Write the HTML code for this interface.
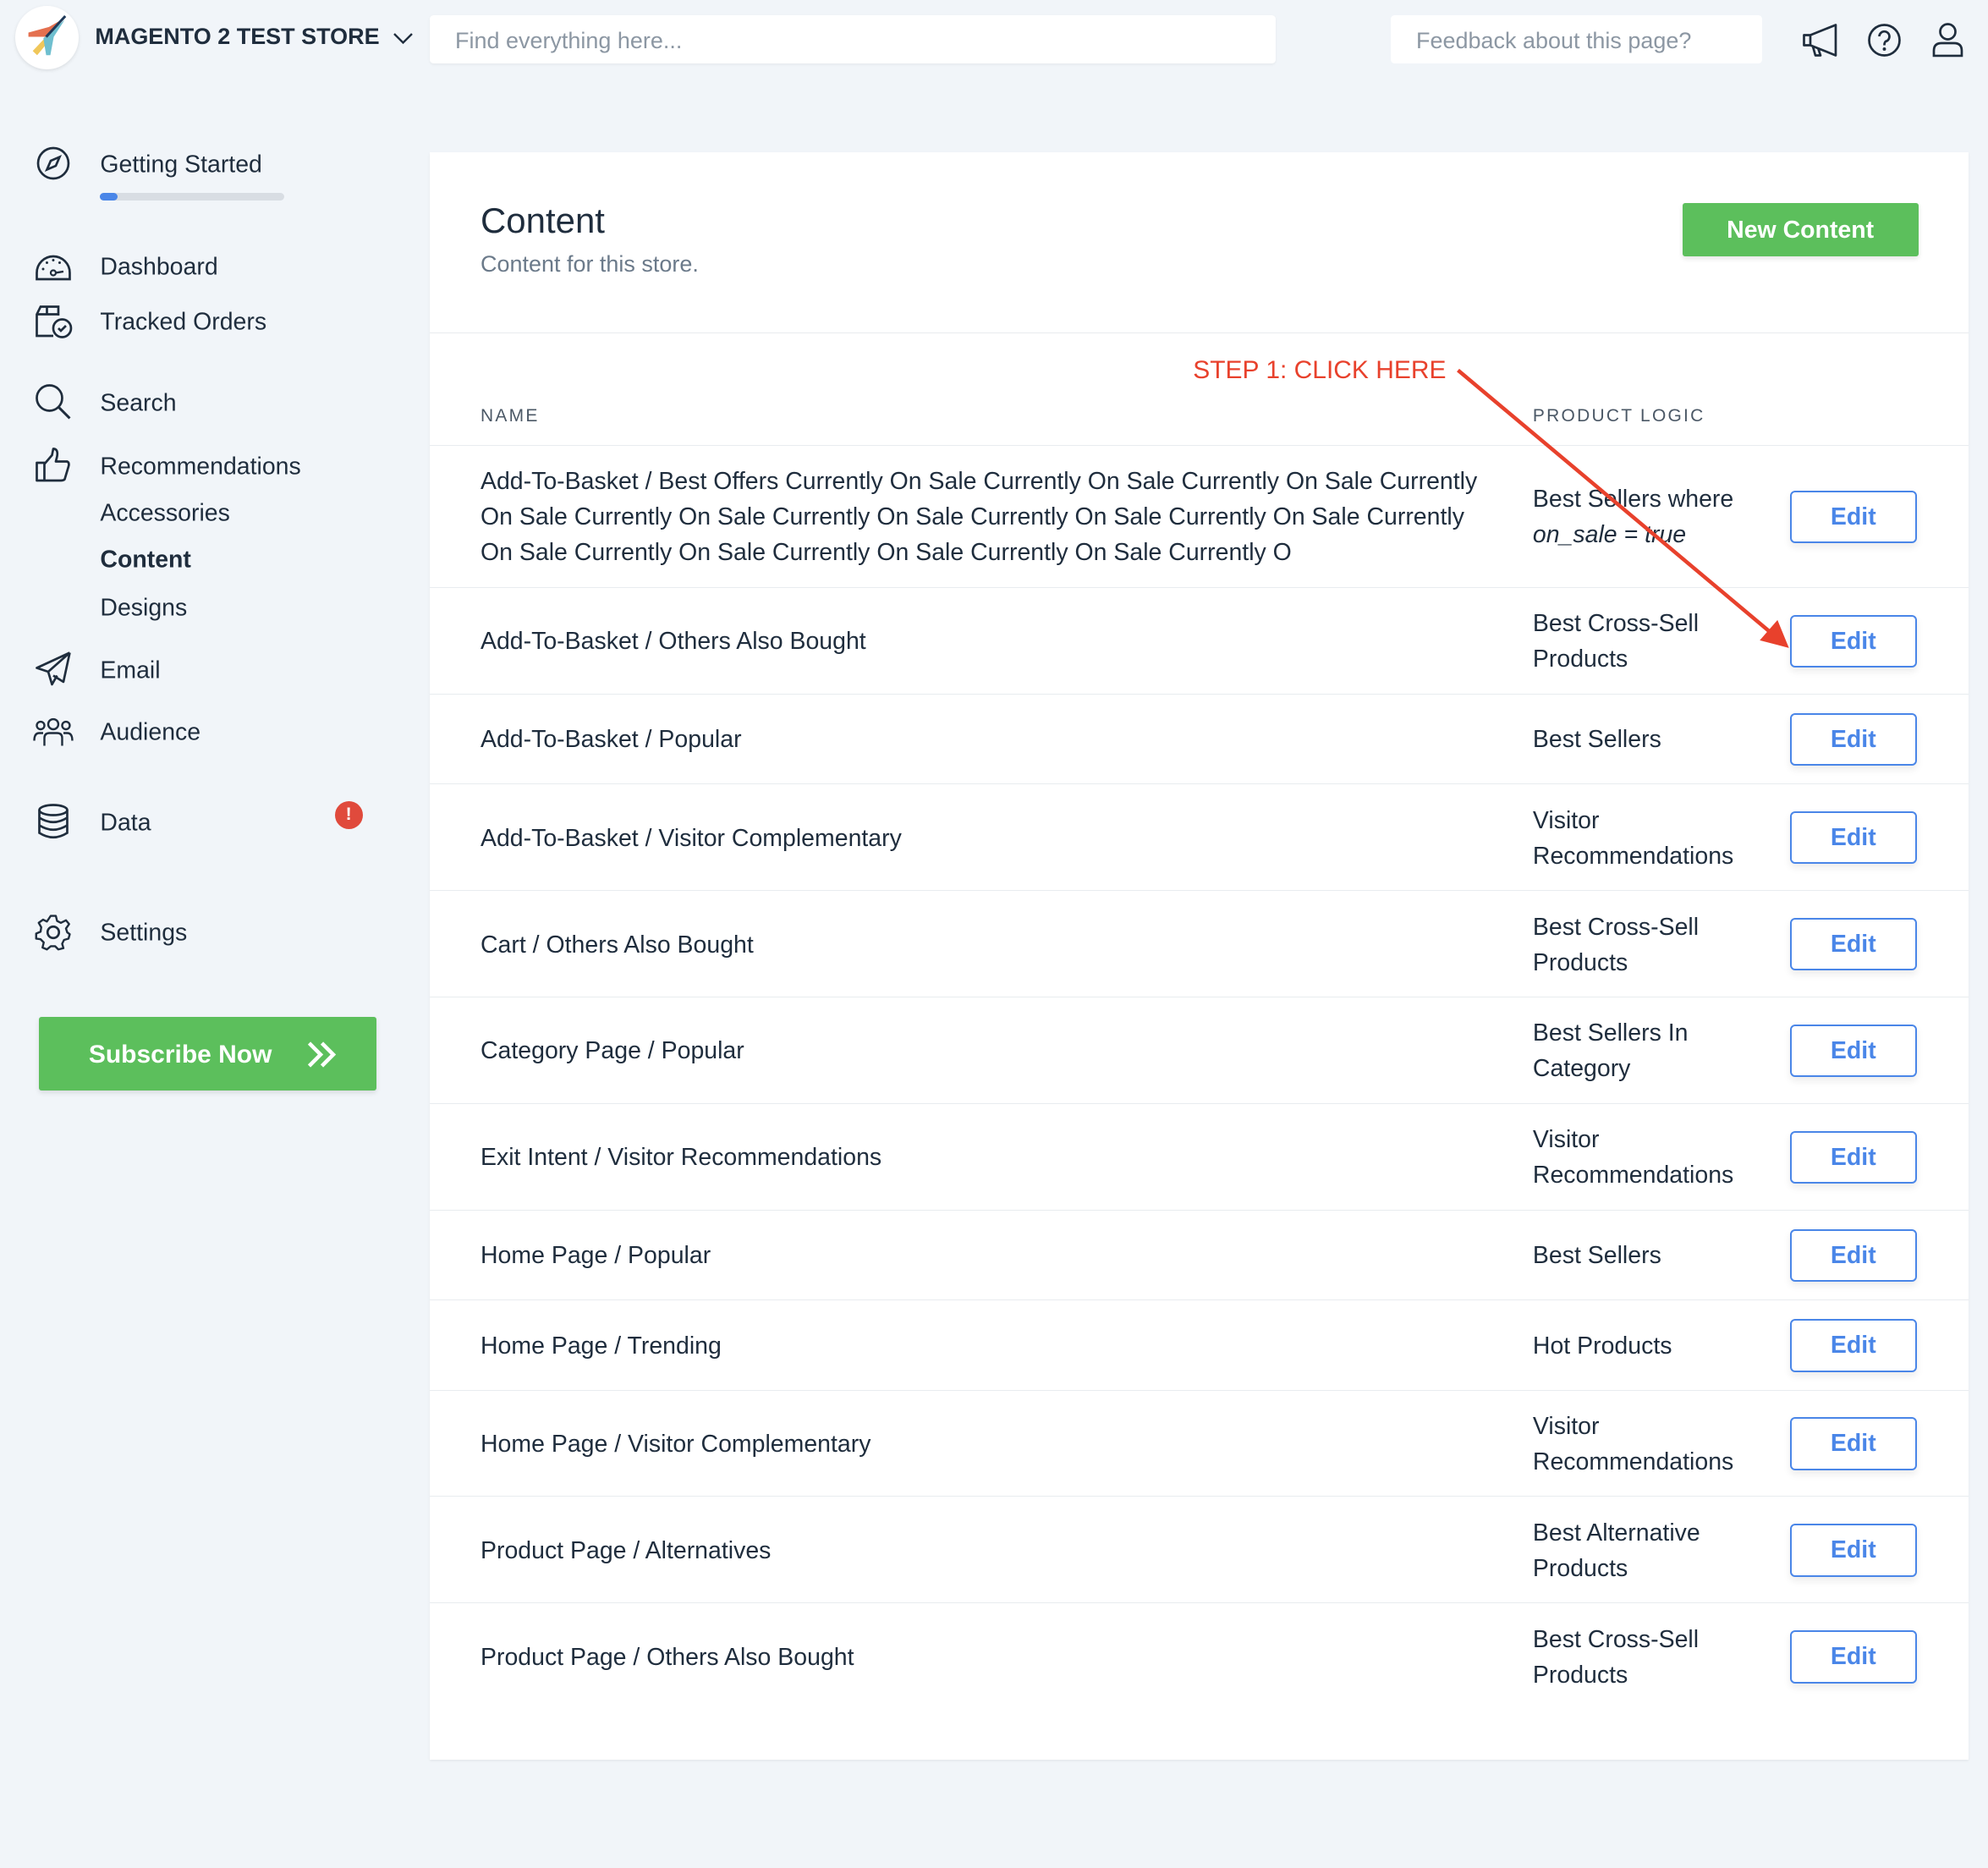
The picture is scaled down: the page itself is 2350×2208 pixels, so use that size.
<!DOCTYPE html>
<html><head><meta charset="utf-8"><style>
html,body{margin:0;padding:0;background:#f1f5f9;}
#w{zoom:1.4987;width:1568px;height:1473px;position:relative;font-family:"Liberation Sans",sans-serif;color:#1f2d3d;overflow:hidden}
.a{position:absolute}
.nav{position:absolute;left:79px;font-size:19px;color:#1f2d3d;transform:translateY(-50%);margin-top:1px}
.ic{position:absolute;left:26px;width:32px;height:32px;transform:translateY(-50%)}
.row{position:absolute;left:339px;width:1214px;border-top:1px solid #e8ecef;display:flex;align-items:center}
.row .n{position:absolute;left:40px;width:805px;font-size:19px;line-height:28px;margin-top:2px}
.row .l{position:absolute;left:870px;width:185px;font-size:19px;line-height:28px;margin-top:2px}
.row .b{position:absolute;left:1073px;width:97px;height:39px;border:2px solid #4a86e8;border-radius:4px;color:#4a86e8;font-weight:bold;font-size:19px;text-align:center;line-height:39px;box-shadow:0 3px 6px rgba(0,0,0,.08);background:#fff}
</style></head><body><div id="w">
<!-- header -->
<div class="a" style="left:12px;top:5px;width:50px;height:50px;border-radius:50%;background:#fff;box-shadow:0 1px 3px rgba(0,0,0,.1)"></div>
<svg class="a" style="left:12px;top:5px" width="50" height="50" viewBox="0 0 50 50"><path d="M10.4 21 L10.4 24.4 L24.4 24.4 L40 8.9 L26.6 16.6 Z" fill="#e4704f"/><path d="M13.8 35.5 L17.3 38.9 L26.6 27.7 L22.2 26.6 Z" fill="#f0c75a"/><path d="M22.2 25.5 L24.4 38.9 L27.7 38.9 L30.4 24.4 L39 11 Z" fill="#6fbfcf"/><path d="M24.4 24.4 L39.5 8" stroke="#1f3a5a" stroke-width="2"/></svg>
<div class="a" style="left:75px;top:19px;font-weight:bold;font-size:18px;color:#1f2d3d">MAGENTO 2 TEST STORE</div>
<svg class="a" style="left:309px;top:25px" width="18" height="12"><path d="M2 2 L9 9 L16 2" stroke="#1f2d3d" stroke-width="1.6" fill="none"/></svg>
<div class="a" style="left:339px;top:12px;width:667px;height:38px;background:#fff;border-radius:3px;box-shadow:0 1px 2px rgba(0,0,0,.05)"><span style="position:absolute;left:20px;top:10px;font-size:18px;color:#8c97a3">Find everything here...</span></div>
<div class="a" style="left:1097px;top:12px;width:293px;height:38px;background:#fff;border-radius:3px"><span style="position:absolute;left:20px;top:10px;font-size:18px;color:#8c97a3">Feedback about this page?</span></div>
<svg class="a" style="left:1420px;top:17px" width="34" height="30"><path d="M3 11 L3 19 L8 19 L28 27 L28 3 L8 11 Z M8 11 L8 19 M10 20 L12 27 L16 27 L14 21" stroke="#1f2d3d" stroke-width="1.8" fill="none" stroke-linejoin="round"/></svg>
<svg class="a" style="left:1471px;top:17px" width="30" height="30"><circle cx="15" cy="15" r="12" stroke="#1f2d3d" stroke-width="1.8" fill="none"/><path d="M11 12 a4 4 0 1 1 5 4 q-1 1 -1 3" stroke="#1f2d3d" stroke-width="1.8" fill="none"/><circle cx="15" cy="22" r="1.3" fill="#1f2d3d"/></svg>
<svg class="a" style="left:1521px;top:16px" width="30" height="30"><circle cx="15" cy="9" r="6" stroke="#1f2d3d" stroke-width="1.8" fill="none"/><path d="M4 28 L4 24 Q4 18 10 18 L20 18 Q26 18 26 24 L26 28 Z" stroke="#1f2d3d" stroke-width="1.8" fill="none"/></svg>
<!-- sidebar -->
<svg class="ic" style="top:129px" viewBox="0 0 32 32"><circle cx="16" cy="16" r="12" stroke="#1f2d3d" stroke-width="1.8" fill="none"/><path d="M21 11 L18 18 L11 21 L14 14 Z" stroke="#1f2d3d" stroke-width="1.8" fill="none"/></svg>
<div class="nav" style="top:129px">Getting Started</div>
<div class="a" style="left:79px;top:152px;width:145px;height:6px;border-radius:3px;background:#d8dde3"></div>
<div class="a" style="left:79px;top:152px;width:14px;height:6px;border-radius:3px;background:#4a86e8"></div>
<svg class="ic" style="top:210px" viewBox="0 0 32 32"><path d="M3 26 L3 21 A13 13 0 0 1 29 21 L29 26 Z" stroke="#1f2d3d" stroke-width="1.8" fill="none"/><circle cx="16" cy="21" r="2" stroke="#1f2d3d" stroke-width="1.5" fill="none"/><path d="M18 21 L24 20" stroke="#1f2d3d" stroke-width="1.6"/><circle cx="8" cy="18" r="1" fill="#1f2d3d"/><circle cx="11" cy="13" r="1" fill="#1f2d3d"/><circle cx="16" cy="11" r="1" fill="#1f2d3d"/><circle cx="21" cy="13" r="1" fill="#1f2d3d"/></svg>
<div class="nav" style="top:210px">Dashboard</div>
<svg class="ic" style="top:253px" viewBox="0 0 32 32"><path d="M20 12 L20 5 L6 5 L3 11 L3 28 L16 28 M3 11 L20 11 M11 5 L11 11" stroke="#1f2d3d" stroke-width="1.8" fill="none"/><circle cx="23" cy="22" r="7" stroke="#1f2d3d" stroke-width="1.8" fill="none"/><path d="M20 22 L22 24 L26 20" stroke="#1f2d3d" stroke-width="1.8" fill="none"/></svg>
<div class="nav" style="top:253px">Tracked Orders</div>
<svg class="ic" style="top:317px" viewBox="0 0 32 32"><circle cx="13" cy="13" r="10" stroke="#1f2d3d" stroke-width="1.8" fill="none"/><path d="M20 20 L29 29" stroke="#1f2d3d" stroke-width="2"/></svg>
<div class="nav" style="top:317px">Search</div>
<svg class="ic" style="top:367px" viewBox="0 0 32 32"><path d="M3 14 L9 14 L9 28 L3 28 Z M9 15 L15 8 L16 3 Q20 3 19 9 L18 13 L27 13 Q29 14 28 17 L25 27 Q24 28 22 28 L9 28" stroke="#1f2d3d" stroke-width="1.8" fill="none" stroke-linejoin="round"/></svg>
<div class="nav" style="top:367px">Recommendations</div>
<div class="nav" style="top:404px">Accessories</div>
<div class="nav" style="top:441px;font-weight:bold">Content</div>
<div class="nav" style="top:479px">Designs</div>
<svg class="ic" style="top:528px" viewBox="0 0 32 32"><path d="M29 3 L3 15 L12 18 L15 28 L19 21 M29 3 L12 18 M29 3 L24 26 L16 21" stroke="#1f2d3d" stroke-width="1.8" fill="none" stroke-linejoin="round"/></svg>
<div class="nav" style="top:528px">Email</div>
<svg class="ic" style="top:577px" viewBox="0 0 32 32"><circle cx="16" cy="10" r="4" stroke="#1f2d3d" stroke-width="1.6" fill="none"/><circle cx="6" cy="11" r="3" stroke="#1f2d3d" stroke-width="1.6" fill="none"/><circle cx="26" cy="11" r="3" stroke="#1f2d3d" stroke-width="1.6" fill="none"/><path d="M9 27 L9 21 Q9 17 13 17 L19 17 Q23 17 23 21 L23 27 M1 23 Q1 17 5 17 L8 17 M31 23 Q31 17 27 17 L24 17" stroke="#1f2d3d" stroke-width="1.6" fill="none"/></svg>
<div class="nav" style="top:577px">Audience</div>
<svg class="ic" style="top:648px" viewBox="0 0 32 32"><ellipse cx="16" cy="7" rx="11" ry="4" stroke="#1f2d3d" stroke-width="1.8" fill="none"/><path d="M5 7 L5 25 Q16 32 27 25 L27 7 M5 13 Q16 20 27 13 M5 19 Q16 26 27 19" stroke="#1f2d3d" stroke-width="1.8" fill="none"/></svg>
<div class="nav" style="top:648px">Data</div>
<div class="a" style="left:264px;top:632px;width:22px;height:22px;border-radius:50%;background:#e04a3c;color:#fff;font-size:14px;font-weight:bold;text-align:center;line-height:22px">!</div>
<svg class="ic" style="top:735px" viewBox="0 0 32 32"><circle cx="16" cy="16" r="4.5" stroke="#1f2d3d" stroke-width="1.8" fill="none"/><path d="M14 3 L18 3 L19 7 L22 8.5 L26 6.5 L28.5 9.5 L26 13 L27 16 L29 17.5 L28 21 L24.5 22 L23 25 L24 28.5 L20 29.5 L17.5 27 L14 27 L11 29.5 L7.5 28 L8.5 24 L6 21.5 L2.5 21 L2.5 17 L6 15.5 L6.5 12 L4.5 8.5 L8 6 L11 7.5 Z" stroke="#1f2d3d" stroke-width="1.6" fill="none" stroke-linejoin="round"/></svg>
<div class="nav" style="top:735px">Settings</div>
<div class="a" style="left:31px;top:802px;width:266px;height:58px;background:#5cbf5c;border-radius:2px;box-shadow:0 2px 4px rgba(0,0,0,.1);color:#fff;font-weight:bold;font-size:20px;line-height:60px"><span style="position:absolute;left:39px">Subscribe Now</span><svg style="position:absolute;left:210px;top:19px" width="26" height="22"><path d="M3 2 L12 11 L3 20 M13 2 L22 11 L13 20" stroke="#fff" stroke-width="3" fill="none"/></svg></div>
<!-- card -->
<div class="a" style="left:339px;top:120px;width:1214px;height:1268px;background:#fff;box-shadow:0 1px 2px rgba(0,0,0,.06)"></div>
<div class="a" style="left:379px;top:158px;font-size:28px;color:#1f2d3d">Content</div>
<div class="a" style="left:379px;top:198px;font-size:18px;color:#6b7a8a">Content for this store.</div>
<div class="a" style="left:1327px;top:160px;width:186px;height:42px;background:#5cbf5c;border-radius:2px;color:#fff;font-weight:bold;font-size:19px;text-align:center;line-height:44px;box-shadow:0 2px 4px rgba(0,0,0,.1)">New Content</div>
<div class="a" style="left:339px;top:262px;width:1214px;border-top:1px solid #e8ecef"></div>
<div class="a" style="left:379px;top:320px;font-size:14px;letter-spacing:1.5px;color:#4b5866">NAME</div>
<div class="a" style="left:1209px;top:320px;font-size:14px;letter-spacing:1.5px;color:#4b5866">PRODUCT LOGIC</div>

<div class="row" style="top:351px;height:112px"><div class="n">Add-To-Basket / Best Offers Currently On Sale Currently On Sale Currently On Sale Currently On Sale Currently On Sale Currently On Sale Currently On Sale Currently On Sale Currently On Sale Currently On Sale Currently On Sale Currently On Sale Currently O</div><div class="l">Best Sellers where <i>on_sale = true</i></div><div class="b">Edit</div></div>
<div class="row" style="top:463px;height:84px"><div class="n">Add-To-Basket / Others Also Bought</div><div class="l">Best Cross-Sell Products</div><div class="b">Edit</div></div>
<div class="row" style="top:547px;height:71px"><div class="n">Add-To-Basket / Popular</div><div class="l">Best Sellers</div><div class="b">Edit</div></div>
<div class="row" style="top:618px;height:84px"><div class="n">Add-To-Basket / Visitor Complementary</div><div class="l">Visitor Recommendations</div><div class="b">Edit</div></div>
<div class="row" style="top:702px;height:84px"><div class="n">Cart / Others Also Bought</div><div class="l">Best Cross-Sell Products</div><div class="b">Edit</div></div>
<div class="row" style="top:786px;height:84px"><div class="n">Category Page / Popular</div><div class="l">Best Sellers In Category</div><div class="b">Edit</div></div>
<div class="row" style="top:870px;height:84px"><div class="n">Exit Intent / Visitor Recommendations</div><div class="l">Visitor Recommendations</div><div class="b">Edit</div></div>
<div class="row" style="top:954px;height:71px"><div class="n">Home Page / Popular</div><div class="l">Best Sellers</div><div class="b">Edit</div></div>
<div class="row" style="top:1025px;height:71px"><div class="n">Home Page / Trending</div><div class="l">Hot Products</div><div class="b">Edit</div></div>
<div class="row" style="top:1096px;height:84px"><div class="n">Home Page / Visitor Complementary</div><div class="l">Visitor Recommendations</div><div class="b">Edit</div></div>
<div class="row" style="top:1180px;height:84px"><div class="n">Product Page / Alternatives</div><div class="l">Best Alternative Products</div><div class="b">Edit</div></div>
<div class="row" style="top:1264px;height:84px"><div class="n">Product Page / Others Also Bought</div><div class="l">Best Cross-Sell Products</div><div class="b">Edit</div></div>

<div class="a" style="left:941px;top:281px;font-size:20px;color:#e8412c">STEP 1: CLICK HERE</div>
<svg class="a" style="left:0;top:0" width="1568" height="1473"><path d="M1150 292 L1398 500" stroke="#e8412c" stroke-width="3"/><path d="M1411 511 L1388 505 L1402 489 Z" fill="#e8412c"/></svg>
</div></body></html>
